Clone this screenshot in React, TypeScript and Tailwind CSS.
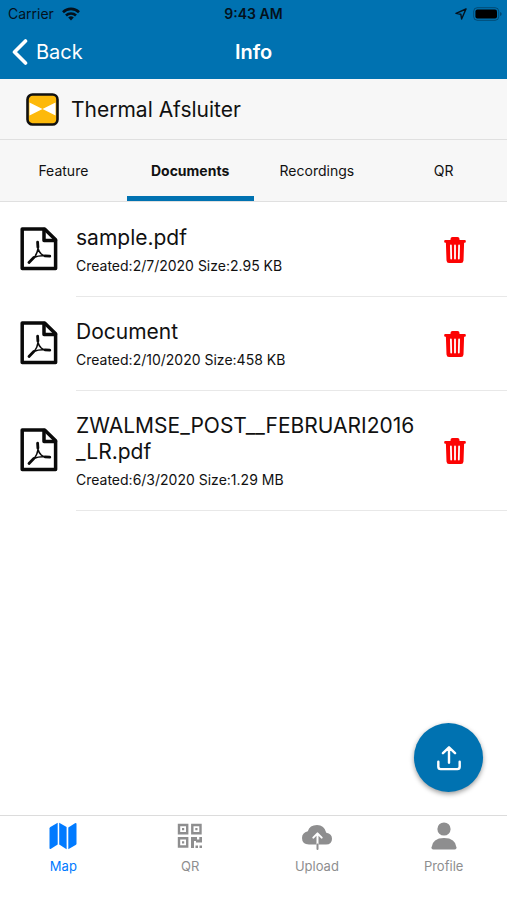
import React, { useState } from 'react';

interface DocumentItem {
    name: string;
    created: string;
    size: string;
}

const documents: DocumentItem[] = [
    { name: 'sample.pdf', created: '2/7/2020', size: '2.95 KB' },
    { name: 'Document', created: '2/10/2020', size: '458 KB' },
    { name: 'ZWALMSE_POST__FEBRUARI2016_LR.pdf', created: '6/3/2020', size: '1.29 MB' },
];

const tabs = ['Feature', 'Documents', 'Recordings', 'QR'];

const WifiIcon = () => (
    <svg width="18" height="14" viewBox="0 0 18 14" aria-hidden="true">
        <g fill="none" stroke="#04111c" strokeWidth="2.6">
            <path d="M1 5.2a11.4 11.4 0 0 1 16 0" />
            <path d="M4 8.5a7.1 7.1 0 0 1 10 0" />
        </g>
        <path d="M9 13.4 6.2 10.6a4 4 0 0 1 5.6 0z" fill="#04111c" />
    </svg>
);

const LocationIcon = () => (
    <svg width="12" height="12" viewBox="0 0 12 12" aria-hidden="true">
        <path d="M11 1 1 5.4l4.8.8.8 4.8z" fill="none" stroke="#04111c" strokeWidth="1.4" strokeLinejoin="round" />
    </svg>
);

const BatteryIcon = () => (
    <svg width="30" height="14" viewBox="0 0 30 14" aria-hidden="true">
        <rect x="0.7" y="0.7" width="25" height="12.6" rx="3.6" fill="none" stroke="#04111c" strokeOpacity="0.4" />
        <rect x="2.4" y="2.4" width="21.6" height="9.2" rx="2" fill="#000" />
        <path d="M27 5v4q1.7-.6 1.7-2T27 5z" fill="#04111c" fillOpacity="0.4" />
    </svg>
);

const ValveIcon = () => (
    <svg width="33" height="33" viewBox="0 0 33 33" aria-hidden="true">
        <rect x="1.5" y="1.5" width="30" height="30" rx="5" fill="#fdb90a" stroke="#111" strokeWidth="2.6" />
        <path d="M3.5 9.5v13l13-6.5zM29.5 9.5v13l-13-6.5z" fill="#fff" />
    </svg>
);

const PdfIcon = () => (
    <svg width="38" height="44" viewBox="0 0 38 44" aria-hidden="true" className="mb-0.5 shrink-0">
        <g fill="none" stroke="#0a0a0a" strokeLinejoin="round" strokeLinecap="round">
            <path d="M2.2 1.9h22.4l11 10.8v28.9H2.2z" strokeWidth="3.5" />
            <path d="M24 2.5v11h11.5" strokeWidth="3.5" />
            <path d="M18 21.5q.8 3 3 5.300 1.200 1.200 3.200 2-5.200-.4-9.700 1.400 2.900-4 3.500-8.700z" strokeWidth="1.6" />
            <path d="M17.600 15.200l.3 5M13.800 30.600l-4.800 4.900M25 28.900l4.800.300" strokeWidth="2.8" />
        </g>
    </svg>
);

const TrashIcon = () => (
    <svg width="22" height="28" viewBox="0 0 22 28" aria-hidden="true">
        <path
            d="M6.500 4V3Q6.500 1 8.500 1h5q2 0 2 2v1h5.300q1 0 1 1v.800q0 1-1 1h-.7L19.500 24.500Q19.300 27 17 27H5Q2.700 27 2.500 24.500L1.900 6.800h-.7q-1 0-1-1V5q0-1 1-1z"
            fill="#fc0303"
        />
        <path d="M6.900 9.500l.3 13M11 9.500v13M15.100 9.500l-.3 13" stroke="#fff" strokeWidth="1.8" strokeLinecap="round" />
    </svg>
);

const ShareIcon = () => (
    <svg width="26" height="26" viewBox="0 0 26 28" fill="none" stroke="#fff" strokeWidth="2.6" strokeLinecap="round" strokeLinejoin="round" aria-hidden="true">
        <path d="M13 19V3M6.500 8.800 13 2.500l6.500 6.300M1.500 18v5.500q0 2.500 2.500 2.500h18q2.500 0 2.500-2.500V18" />
    </svg>
);

const MapIcon = () => (
    <svg width="28" height="28" viewBox="0 0 28 28" fill="currentColor" aria-hidden="true">
        <path d="M.5 6.600q0-1 .9-1.600L8.700.8v21.600L2 26.800Q.5 27.600.5 26z" />
        <path d="M10.200.8 17.600 5v22.200l-7.400-4.600z" />
        <path d="M27.500 21.400q0 1-.9 1.600l-7.300 4.200V5.400L26 1.200q1.500-.8 1.500.8z" />
    </svg>
);

const QrIcon = () => (
    <svg width="26" height="26" viewBox="0 0 26 26" aria-hidden="true">
        <path
            d="M2 2h8.200v8.200H2zM15.300 2h8.200v8.200h-8.200zM2 15.300h8.200v8.200H2z"
            fill="none"
            stroke="currentColor"
            strokeWidth="2.4"
        />
        <g fill="currentColor">
            <path d="M5 5h2.200v2.200H5zM18.300 5h2.200v2.200h-2.200zM5 18.300h2.200v2.200H5z" />
            <path d="M14 14h6v2.500h2.300V14H25v5.500h-6V18h-2v7h-3zM18.500 22.500H21V25h-2.500zM22.500 22.500H25V25h-2.500z" />
        </g>
    </svg>
);

const CloudIcon = () => (
    <svg width="30" height="28" viewBox="0 0 30 28" aria-hidden="true">
        <path d="M7 22.500q-7-.2-7-6.500 0-5.400 5.800-6.800Q7.700 3 15 3q7.300 0 9.300 7.700 5.700.8 5.700 6 0 5.800-6 5.800z" fill="currentColor" />
        <path d="M15.500 22.500V12M11.300 15.600l4.200-4.200 4.200 4.200" fill="none" stroke="#fff" strokeWidth="2" strokeLinecap="round" strokeLinejoin="round" />
        <path d="M15.500 22.500V27" stroke="currentColor" strokeWidth="2" strokeLinecap="round" />
    </svg>
);

const PersonIcon = () => (
    <svg width="26" height="28" viewBox="0 0 26 28" fill="currentColor" aria-hidden="true">
        <circle cx="13" cy="7" r="6.6" />
        <path d="M.5 25.500Q1.500 16 13 16t12.500 9.500q.2 2-1.800 2H2.300q-2 0-1.800-2z" />
    </svg>
);

const navItems = [
    { label: 'Map', icon: <MapIcon />, active: true },
    { label: 'QR', icon: <QrIcon />, active: false },
    { label: 'Upload', icon: <CloudIcon />, active: false },
    { label: 'Profile', icon: <PersonIcon />, active: false },
];

const DocumentRow: React.FC<{ item: DocumentItem }> = ({ item }) => (
    <li className="flex items-center pl-5">
        <PdfIcon />
        <div className="ml-[18px] flex flex-1 items-center border-b border-[#e8e8e8] pt-[22px] pr-[41px] pb-[21px]">
            <div className="flex-1 pr-6">
                <h2 className="text-[21px] leading-[26px] break-all">{item.name}</h2>
                <p className="mt-1.5 text-sm leading-[18px]">
                    Created:{item.created} Size:{item.size}
                </p>
            </div>
            <button type="button" aria-label={`Delete ${item.name}`}>
                <TrashIcon />
            </button>
        </div>
    </li>
);

export default function App() {
    const [activeTab, setActiveTab] = useState('Documents');

    return (
        <div className="relative flex min-h-screen flex-col bg-white font-['Inter',sans-serif] text-[#111]">
            {/* Status bar + navigation header */}
            <header className="bg-[#0072b1]">
                <div className="grid h-7 grid-cols-3 items-center px-2 text-sm text-[#04111c]">
                    <div className="flex items-center gap-2">
                        Carrier <WifiIcon />
                    </div>
                    <div className="text-center font-semibold">9:43 AM</div>
                    <div className="-mr-1 flex items-center justify-end gap-1.5">
                        <LocationIcon />
                        <BatteryIcon />
                    </div>
                </div>
                <div className="grid h-[51px] grid-cols-3 items-center px-3 pb-1 text-xl text-white">
                    <a href="#back" className="flex items-center gap-2">
                        <svg width="16" height="26" viewBox="0 0 16 26" aria-hidden="true">
                            <path d="M13.500 2 2.500 13l11 11" fill="none" stroke="#fff" strokeWidth="3.6" strokeLinecap="round" strokeLinejoin="round" />
                        </svg>
                        Back
                    </a>
                    <h1 className="text-center font-semibold">Info</h1>
                </div>
            </header>

            <div className="flex h-[61px] items-center gap-3 border-b border-[#e0e0e0] bg-[#f7f7f7] pl-[26px] text-[21px]">
                <ValveIcon />
                <span className="pt-0.5">Thermal Afsluiter</span>
            </div>

            {/* Tabs */}
            <div role="tablist" className="grid h-[62px] grid-cols-4 border-b border-[#e0e0e0] bg-[#f7f7f7] text-sm">
                {tabs.map((tab) => (
                    <button
                        key={tab}
                        type="button"
                        role="tab"
                        aria-selected={tab === activeTab}
                        onClick={() => setActiveTab(tab)}
                        className={
                            tab === activeTab
                                ? 'border-b-5 border-[#0072b1] pt-1.5 font-bold'
                                : 'border-b-5 border-transparent pt-1.5'
                        }
                    >
                        {tab}
                    </button>
                ))}
            </div>

            <main className="flex-1 pt-px">
                <ul>
                    {documents.map((item) => (
                        <DocumentRow key={item.name} item={item} />
                    ))}
                </ul>
            </main>

            <button
                type="button"
                aria-label="Upload document"
                className="absolute right-6 bottom-[108px] flex size-[69px] items-center justify-center rounded-full bg-[#0072b1] shadow-[0_2px_5px_rgba(0,0,0,0.4)]"
            >
                <ShareIcon />
            </button>

            {/* Bottom navigation */}
            <nav className="grid h-[85px] grid-cols-4 items-start border-t border-[#dcdcdc] pt-1.5 text-[13px] leading-5">
                {navItems.map(({ label, icon, active }) => (
                    <a
                        key={label}
                        href={`#${label.toLowerCase()}`}
                        className={
                            active
                                ? 'flex flex-col items-center gap-1.5 text-[#007aff]'
                                : 'flex flex-col items-center gap-1.5 text-[#8e8e8f]'
                        }
                    >
                        <span className="flex h-7 items-center">{icon}</span>
                        {label}
                    </a>
                ))}
            </nav>
        </div>
    );
}
